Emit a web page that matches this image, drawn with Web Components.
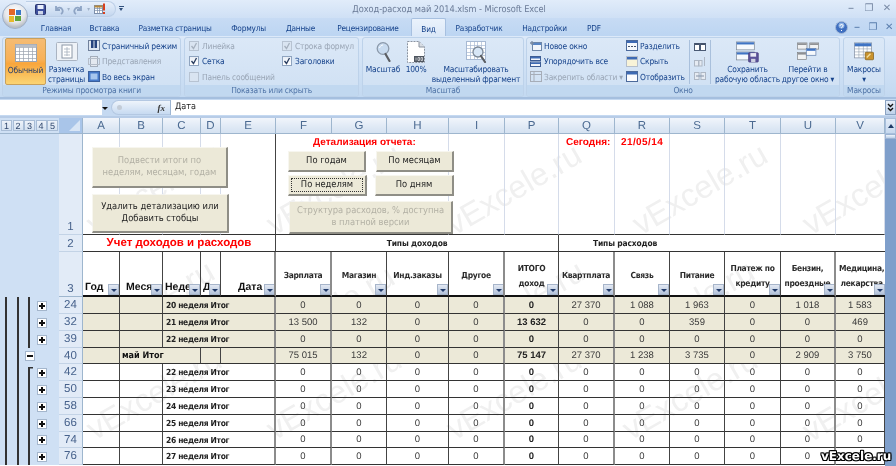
<!DOCTYPE html>
<html lang="ru"><head><meta charset="utf-8"><title>Excel</title>
<style>html,body{margin:0;padding:0;background:#fff}</style></head>
<body>
<x-window></x-window>
<script>
const UI='"Liberation Sans","DejaVu Sans",sans-serif';
const CD='"DejaVu Sans Condensed","Liberation Sans",sans-serif';
const svg=(w,h,b)=>`<svg xmlns="http://www.w3.org/2000/svg" width="${w}" height="${h}" viewBox="0 0 ${w} ${h}" style="display:block">${b}</svg>`;
const sz=(s,w,h)=>s.replace(/width="[\d.]+" height="[\d.]+"/,`width="${w}" height="${h}"`);
function def(name,css,html,extra){
  customElements.define(name,class extends HTMLElement{
    constructor(){super();const s=this.attachShadow({mode:'open'});
      s.innerHTML=`<style>*{box-sizing:border-box}${css}</style>`+(typeof html==='function'?html(this):html);}
    connectedCallback(){
      if(this._done)return;this._done=1;
      if(extra)extra.call(this,this.shadowRoot);
    }
  });
}
const gridRows=(x,y,w,h,c,nx,ny)=>{let s=`<rect x="${x}" y="${y}" width="${w}" height="${h}" fill="#fff" stroke="${c}"/>`;
  for(let i=1;i<nx;i++){const p=x+Math.round(i*w/nx);s+=`<path d="M${p} ${y}V${y+h}" stroke="${c}" stroke-width=".7"/>`}
  for(let i=1;i<ny;i++){const p=y+Math.round(i*h/ny);s+=`<path d="M${x} ${p}H${x+w}" stroke="${c}" stroke-width=".7"/>`}
  return s;};
const IC={
 save:svg(11,11,`<rect x=".5" y=".5" width="10" height="10" rx="1" fill="#3d4f9c" stroke="#2b3670"/><rect x="2.5" y="1" width="6" height="4" fill="#e8eefb"/><rect x="3" y="7" width="5" height="3.5" fill="#cdd6ea"/>`),
 undo:svg(11,11,`<path d="M3 2v4h4M3.500 5.500C5 3 8.500 3 9.500 6 10 7.500 9.500 9 8 10" fill="none" stroke="#8ea4c4" stroke-width="1.800"/>`),
 redo:svg(11,11,`<path d="M8 2v4H4M7.500 5.500C6 3 2.500 3 1.500 6 1 7.500 1.500 9 3 10" fill="none" stroke="#8ea4c4" stroke-width="1.800"/>`),
 custom:svg(12,12,`${gridRows(.5,2.5,8,8,'#7d8fab',3,3)}<rect x=".5" y="2.500" width="8" height="2" fill="#b88a3c"/><path d="M10 .5v7" stroke="#d8401e" stroke-width="2"/><rect x="9" y="9" width="2" height="2" fill="#d8401e"/>`),
 normal:svg(22,18,`${gridRows(.5,.5,21,17,'#9aa2ae',5,5)}<rect x=".5" y=".5" width="21" height="3" fill="#b9bec6"/>`),
 layout:svg(22,19,`<rect x=".5" y=".5" width="21" height="18" rx="1" fill="#eef2f7" stroke="#aab4c2"/><rect x="6" y="3" width="10" height="13" fill="#fff" stroke="#8c98a8"/><path d="M8 7h6M8 10h6M8 13h6M11 5v9" stroke="#a5aebb" stroke-width=".8"/>`),
 pgbreak:svg(12,11,`<rect x=".5" y=".5" width="11" height="10" fill="#dfe7f2" stroke="#70819c"/><rect x="3" y="0" width="2.500" height="8" fill="#27447e"/><rect x="6.500" y="0" width="2.500" height="8" fill="#27447e"/>`),
 views:svg(12,11,`<rect x="2.500" y=".5" width="7" height="10" fill="#e4e9f0" stroke="#a3adbb"/><rect x=".5" y="2.500" width="11" height="6" fill="none" stroke="#b5bdc9"/>`),
 full:svg(12,11,`<rect x=".5" y=".5" width="11" height="10" fill="#4578c8" stroke="#3a5f9c"/><rect x="2.500" y="2.500" width="7" height="6" fill="#a7c6ee"/>`),
 zoom:svg(15,20,`<circle cx="7" cy="6.500" r="5.800" fill="#c8dbf0" stroke="#8c9aab" stroke-width="1.300"/><path d="M9.500 12l4 7" stroke="#5c5f64" stroke-width="2.200" stroke-linecap="round"/><path d="M3.500 6c.6-2 2-3 3.600-3" stroke="#fff" fill="none" stroke-width="1"/>`),
 hundred:svg(18,22,`<path d="M.5.5H12L17.500 6V21.500H.5z" fill="#fff" stroke="#8a93a0" stroke-dasharray="2 1"/><path d="M12 .5V6H17.500" fill="#d8dde4" stroke="#8a93a0"/><rect x="7" y="15" width="10" height="6" fill="#4f5660"/><path d="M9 16.500v3M11 16.500h1.500v3H11zM14 16.500h1.500v3H14z" stroke="#fff" stroke-width=".6" fill="none"/>`),
 zoomsel:svg(21,22,`${gridRows(.5,.5,19,18,'#a7b9d3',5,5)}<circle cx="12" cy="11" r="5" fill="#d7e6f6" stroke="#7b8796" stroke-width="1.300"/><path d="M15 15l4 6" stroke="#5c5f64" stroke-width="2.200" stroke-linecap="round"/>`),
 newwin:svg(12,11,`<rect x="2.500" y="2.500" width="9" height="8" fill="#f3f6fb" stroke="#6d86a8"/><rect x="3" y="3" width="8" height="2" fill="#5a86c4"/><path d="M0 3h4M2 1v4" stroke="#7a8aa3" stroke-width="1.300"/>`),
 arrange:svg(12,11,`<rect x=".5" y=".5" width="10" height="4" fill="#f3f6fb" stroke="#3d5d94"/><rect x="1" y="1" width="9" height="1.500" fill="#3d6ab4"/><rect x=".5" y="6" width="10" height="4.500" fill="#f3f6fb" stroke="#3d5d94"/><rect x="1" y="6.500" width="9" height="1.500" fill="#3d6ab4"/>`),
 freeze:svg(12,11,`<rect x=".5" y=".5" width="11" height="10" fill="none" stroke="#a6adb8"/><path d="M.5 3.500h11M4 .5v10" stroke="#a6adb8"/>`),
 split:svg(12,11,`<rect x=".5" y=".5" width="11" height="10" fill="#f6f9fd" stroke="#4c6a9b"/><rect x="1" y="1" width="10" height="2" fill="#3d6ab4"/><path d="M2 6.500h2M5 6.500h2M8 6.500h2" stroke="#44526b"/>`),
 hide:svg(12,11,`<rect x=".5" y=".5" width="11" height="10" fill="#f8f3d8" stroke="#b6bfcb"/><rect x="1" y="1" width="10" height="2.500" fill="#3d6ab4"/>`),
 unhide:svg(12,11,`<rect x=".5" y=".5" width="11" height="10" fill="#fbfcfe" stroke="#4c6a9b"/><rect x="1" y="1" width="10" height="2.500" fill="#3d6ab4"/>`),
 cmp1:svg(12,10,`<rect x=".5" y="1.500" width="5" height="7" fill="#fff" stroke="#4a5a74"/><rect x="6.500" y="1.500" width="5" height="7" fill="#fff" stroke="#4a5a74"/><rect x="1" y="1" width="4" height="2" fill="#44526b"/><rect x="7" y="1" width="4" height="2" fill="#44526b"/>`),
 cmp2:svg(12,10,`<rect x=".5" y="3.500" width="4" height="5.500" fill="#e6ebf2" stroke="#aeb7c4"/><rect x="5" y="3.500" width="3" height="5.500" fill="#e6ebf2" stroke="#aeb7c4"/><path d="M10.500 0v9" stroke="#aeb7c4"/>`),
 cmp3:svg(12,10,`<rect x=".5" y="1.500" width="4.500" height="7" fill="#e6ebf2" stroke="#aeb7c4"/><rect x="7" y="1.500" width="4.500" height="7" fill="#e6ebf2" stroke="#aeb7c4"/><path d="M2 5h8" stroke="#8593a8"/>`),
 workspace:sz(svg(32,29,`<rect x=".5" y=".5" width="25" height="11" fill="#f6f9fd" stroke="#7d8897"/><rect x="1" y="1" width="24" height="3" fill="#3f74c4"/><rect x=".5" y="14.500" width="25" height="11" fill="#f6f9fd" stroke="#7d8897"/><rect x="1" y="15" width="24" height="3" fill="#3f74c4"/><rect x="17.500" y="15.500" width="13.500" height="13" rx="1" fill="#5b5299" stroke="#453c7c"/><rect x="20" y="16" width="8" height="5" fill="#e9eaf4"/><rect x="21" y="24" width="6" height="4.500" fill="#cfd1e2"/>`),23,22),
 switchw:sz(svg(32,26,`<rect x=".5" y=".5" width="14" height="9" fill="#f1f2f3" stroke="#7d8084"/><rect x="1" y="1" width="13" height="2.500" fill="#8d8f93"/><rect x="18.500" y=".5" width="13" height="9" fill="#f1f2f3" stroke="#7d8084"/><rect x="19" y="1" width="12" height="2.500" fill="#8d8f93"/><rect x=".5" y="14.500" width="13" height="10" fill="#f1f2f3" stroke="#7d8084"/><rect x="1" y="15" width="12" height="2.500" fill="#8d8f93"/><rect x="13.500" y="8.500" width="14" height="10" fill="#f6f9fd" stroke="#5c7aa8"/><rect x="14" y="9" width="13" height="3" fill="#3f74c4"/>`),22,19),
 macros:sz(svg(28,24,`${gridRows(.5,.5,23,20,'#8693a6',4,5)}<rect x="1" y="1" width="22" height="4" fill="#3f74c4"/><rect x="15" y="13" width="11" height="10" rx="1" fill="#c9922c" stroke="#86601c"/><path d="M17 20l5-5" stroke="#f3dd9c" stroke-width="2"/>`),21,19),
 orb:svg(26,26,`<defs><radialGradient id="o" cx=".5" cy=".35" r=".75"><stop offset="0" stop-color="#fff"/><stop offset=".55" stop-color="#e4e6ea"/><stop offset=".8" stop-color="#b7bcc4"/><stop offset="1" stop-color="#f3e6c4"/></radialGradient></defs><circle cx="13" cy="13" r="12.500" fill="url(#o)" stroke="#9eb0c9"/><path d="M7 6h6v6H7z" fill="#e2662a"/><path d="M14 7h5v5h-5z" fill="#3c78c6"/><path d="M7 13h5v6H7z" fill="#e8b92e"/><path d="M13 13h6v5h-6z" fill="#61a53c"/>`),
 help:svg(13,13,`<circle cx="6.500" cy="6.500" r="6" fill="#3f6fc0" stroke="#a6bbd8"/><circle cx="6.500" cy="4.500" r="3" fill="#a5c6ee" opacity=".8"/><path d="M5 5c0-2 3-2 3-.3 0 1-1.500 1.200-1.500 2.500M6.500 9v1" stroke="#fff" fill="none"/>`),
 expand:svg(7,9,`<path d="M1 1l2.500 2.500L6 1M1 5l2.500 2.500L6 5" fill="none" stroke="#111" stroke-width="1.400"/>`)
};

def('x-titlebar',`:host{display:flex;height:18px;flex:none;position:relative;background:linear-gradient(#e1ecfa,#cfe0f5);font:9.2px ${CD};letter-spacing:-.06px;color:#6a7a96;align-items:center;justify-content:center}
.orb{position:absolute;left:2px;top:3px;z-index:5}
.qat{position:absolute;left:26px;top:1px;width:90px;height:16px;border-radius:0 9px 9px 0;background:linear-gradient(#e8f0fb,#c4d7ef);border:1px solid #bccfe7;border-left:0;display:flex;align-items:center;padding-left:9px}
.qat i{font-style:normal;font-size:6px;color:#9fb1c9;width:9px;text-align:center;flex:none}
.more{position:absolute;left:119px;top:6px;width:5px;height:5px;border-top:1px solid #31507c}
.more:after{content:"";position:absolute;left:0;top:1px;border:2.500px solid transparent;border-top:3px solid #31507c}
.t{margin-left:2px}
.c{position:absolute;right:0;top:4px;display:flex;color:#7a8ba6;font:bold 10px ${UI}}
.c span{width:18px;text-align:center;line-height:10px}`,
`<div class="orb">${IC.orb}</div><div class="qat">${IC.save}<span style="width:7px"></span>${IC.undo}<i>▾</i>${IC.redo}<i>▾</i><span style="width:1px"></span>${IC.custom}</div><div class="more"></div><div class="t">Доход-расход май 2014.xlsm - Microsoft Excel</div>
<div class="c"><span>–</span><span>❐</span><span>✕</span></div>`);

const TABS=[['Главная',48],['Вставка',49],['Разметка страницы',92],['Формулы',55],['Данные',49],['Рецензирование',86],['Вид',35],['Разработчик',66],['Надстройки',65],['PDF',34]];
def('x-tabs',`:host{display:flex;height:18px;flex:none;position:relative;background:linear-gradient(#c7dbf4,#bcd5f2);font:8.2px ${CD};letter-spacing:-.2px;color:#15428b;padding-left:32px;align-items:stretch}
span{display:flex;align-items:center;justify-content:center;flex:none;padding-top:2px}
.a{background:linear-gradient(#eaf2fc,#dbe8f8);border:1px solid #a7c0e0;border-bottom:0;border-radius:2px 2px 0 0}
.c{position:absolute;right:-1px;top:3px;display:flex;align-items:center;color:#5b7fae;font:bold 10px ${UI}}
.c b{width:16px;text-align:center;font-weight:bold}`,
`${TABS.map(([t,w])=>`<span class="${t==='Вид'?'a':''}" style="width:${w}px">${t}</span>`).join('')}<div class="c"><div style="margin-right:1px">${IC.help}</div><b>–</b><b>❐</b><b>✕</b></div>`);

def('x-ribbon',`:host{display:flex;height:63px;flex:none;background:linear-gradient(#dce9f9,#c3d9f1);border-bottom:2px solid #a5bfdf;padding:1px 0 0 2px;gap:3px}`,`<slot></slot>`);

def('x-group',`:host{display:flex;flex-direction:column;height:60px;flex:none;border:1px solid #bdd2ea;border-radius:3px;background:linear-gradient(#dbe8f7,#cfe0f3);overflow:hidden;font:8.4px ${CD};letter-spacing:-.2px;color:#15428b}
.b{flex:1;display:flex;min-height:0}
.l{flex:none;height:11px;line-height:10px;text-align:center;background:#c1d8f0;color:#4f73a6}`,
h=>`<div class="b"><slot></slot></div><div class="l">${h.getAttribute('label')}</div>`);

def('x-big',`:host{display:flex;flex-direction:column;align-items:center;flex:none;height:47px;font:8.4px/9.500px ${CD};letter-spacing:-.2px;color:#15428b;text-align:center;white-space:nowrap}
:host([on]){background:linear-gradient(#f5bc74 0,#f8b158 45%,#f9a63c 55%,#fbd473 100%);border:1px solid #c8a05c;border-radius:2px;color:#273f6b}
.i{height:27px;display:flex;align-items:center;justify-content:center;flex:none}`,
h=>`<div class="i"><slot name="i"></slot></div><slot></slot>`);

def('x-col',`:host{display:flex;flex-direction:column;flex:none}`,`<slot></slot>`);

def('x-item',`:host{display:flex;align-items:center;height:15.500px;gap:2px;flex:none;white-space:nowrap;font:8.4px ${CD};letter-spacing:-.2px;color:#15428b}
:host([off]){color:#9aa6b6}`,`<slot name="i"></slot><slot></slot>`);

def('x-check',`:host{display:flex;align-items:center;height:15.500px;gap:3px;flex:none;white-space:nowrap;font:8.4px ${CD};letter-spacing:-.2px;color:#15428b}
:host([off]){color:#9aa6b6}
.b{width:10px;height:10px;border:1px solid #8fa4bf;background:linear-gradient(#e8eef6,#fff);display:flex;align-items:center;justify-content:center}
:host([off]) .b{border-color:#b7c3d2;background:#d9e4f1}`,
h=>`<span class="b">${h.hasAttribute('checked')?svg(8,8,`<path d="M1.500 4l2 2.500L6.500 1" fill="none" stroke="${h.hasAttribute('off')?'#a6b1bf':'#2a3d5f'}" stroke-width="1.300"/>`):''}</span><slot></slot>`);

def('x-formula',`:host{display:flex;height:17px;flex:none;background:#c5d9f1;padding-top:1px;font:9px ${CD};color:#222}
.n{width:102px;height:15px;background:#fff}
.a{width:6px;display:flex;align-items:center;justify-content:center;margin-right:3px}
.a:after{content:"";border:3px solid transparent;border-top:3px solid #111;margin-top:3px}
.fx{width:59px;height:15px;position:relative;background:linear-gradient(#eef4fb,#c7daf1);border-radius:9px 0 0 9px;border:1px solid #b4c8e2;border-right:0;display:flex;align-items:center;justify-content:flex-end;padding-right:5px;font:italic bold 9px "Liberation Serif",serif;color:#333}
.fx:before{content:"";position:absolute;left:5px;top:4px;width:5px;height:5px;border-radius:50%;background:#c3ccd7}
.v{flex:1;height:15px;background:#fff;border-left:1px solid #9db5d2;padding-left:4px;line-height:14px}
.e{width:11px;height:15px;background:linear-gradient(#e6eef9,#bfd2ea);border:1px solid #8ba3c2;display:flex;align-items:center;justify-content:center}`,
`<div class="n"></div><div class="a"></div><div class="fx">fx</div><div class="v">Дата</div><div class="e">${IC.expand}</div>`);

def('x-xlbtn',`:host{position:absolute;display:flex;align-items:center;justify-content:center;text-align:center;background:#ece9d8;border-right:2px solid #8f8e86;border-bottom:2px solid #8f8e86;border-top:1px solid #f7f6ef;border-left:1px solid #f7f6ef;font:9.3px/12.500px ${CD};color:#222;white-space:nowrap;z-index:3}
:host([off]){color:#b2b0a4}
:host([focus])::after{content:"";position:absolute;inset:2px;border:1px dotted #333}`,`<slot></slot>`);

const COLS=[['A',37],['B',43],['C',38],['D',20],['E',55],['F',56],['G',55],['H',62],['I',56],['P',54],['Q',56],['R',55],['S',55],['T',56],['U',55],['V',49]];
const HEAD=[['Год','l'],['Меся','l lb'],['Неде','l'],['Д','l'],['Дата','l2 gr'],['Зарплата','gr'],['Магазин'],['Инд.заказы'],['Другое','gr'],['ИТОГО<br>доход'],['Квартплата','gr'],['Связь'],['Питание'],['Платеж по<br>кредиту'],['Бензин,<br>проездные','gr'],['Медицина,<br>лекарства','clip']];
const Z=['0','0','0','0','0','0','0','0','0','0','0'];
const ROWS=[
 [24,1,'20 неделя Итог',['0','0','0','0','0','27 370','1 088','1 963','0','1 018','1 583']],
 [32,1,'21 неделя Итог',['13 500','132','0','0','13 632','0','0','359','0','0','469']],
 [39,1,'22 неделя Итог',Z],
 [40,1,'май Итог',['75 015','132','0','0','75 147','27 370','1 238','3 735','0','2 909','3 750']],
 [42,0,'22 неделя Итог',Z],[50,0,'23 неделя Итог',Z],[58,0,'24 неделя Итог',Z],
 [66,0,'25 неделя Итог',Z],[74,0,'26 неделя Итог',Z],[76,0,'27 неделя Итог',Z],
];
const HS=[17,17,17,16,17,17,17,17,16,17];
const WMARKS=[[97,240],[277,240],[457,240],[643,240],[813,240],[90,357],[270,362],[460,357],[630,357],[810,357],[97,445],[277,445],[457,445],[633,445],[813,447]];
const BG='#cfe0f4',LN=x=>`linear-gradient(#333,#333) ${x}px 0/2px 100% no-repeat`;
def('x-sheet',`:host{display:block;flex:1;min-width:0;height:350px;position:relative;overflow:hidden;background:#fff;border-top:2px solid #b7cce7;font:9.5px ${UI};color:#333}
.g{display:grid;grid-template-columns:59px 24px ${COLS.map(c=>c[1]+'px').join(' ')};grid-template-rows:16px 101px 17px 45px ${HS.map(h=>h+'px').join(' ')}}
.g>div{min-width:0;min-height:0}
.ch{background:linear-gradient(#f1f5fb,#dfe9f5 60%,#d5e2f1);border-right:1px solid #9eb6ce;border-bottom:1px solid #9eb6ce;color:#4b6a91;font-size:11.500px;display:flex;align-items:center;justify-content:center}
.lv{background:${BG};border-bottom:1px solid #9eb6ce;display:flex;align-items:center;padding-left:1px}
.lv b{width:11px;height:11px;font:9px/10px ${UI};text-align:center;background:linear-gradient(#eef3fa,#d5e2f1);border:1px solid #a9bdd6;color:#30476d;margin-right:.5px}
.cor{background:#a9c5e9;position:relative;border-right:1px solid #9eb6ce;border-bottom:1px solid #9eb6ce}
.cor:after{content:"";position:absolute;right:2px;bottom:2px;width:0;height:0;border-left:11px solid transparent;border-bottom:11px solid #d8e5f5}
.gut{background:${BG}}
.rh{background:#e2ebf7;border-right:1px solid #9eb6ce;border-bottom:1px solid #c3d3e6;color:#47628c;font-size:11.500px;display:flex;align-items:flex-end;justify-content:center;line-height:14px}
.r1{border-right:1px solid #d5dcea;border-bottom:1px solid #333}
.dk{border-right:1px solid #444}
.red{color:#f00;font:bold 10px ${UI};padding-top:3px;white-space:nowrap}
.r2{border-bottom:1px solid #333;display:flex;align-items:center;justify-content:center;font:bold 8.4px ${CD};letter-spacing:-.15px;color:#222;border-right:1px solid #444;white-space:nowrap}
.ttl{color:#f00;font:bold 11.500px ${UI};letter-spacing:0}
.hd{position:relative;border-right:1px solid #444;border-bottom:2px solid #111;display:flex;align-items:center;justify-content:center;text-align:center;font:bold 8.4px/15px ${CD};letter-spacing:-.3px;color:#2b2b2b;white-space:nowrap;overflow:hidden;padding-top:4px}
.hd.l,.hd.l2{justify-content:flex-start;align-items:flex-end;padding:0 0 1px 2px;font:bold 10.500px/13px ${UI};letter-spacing:0;color:#111}
.hd.lb{padding-left:6px}
.hd.l2{padding-left:17px}
.hd.clip{justify-content:flex-start;padding-left:3px;border-right:0}
.hd.gr,.d.gr{border-right:2px solid #8c8c8c}
.hd.gr .fl{right:-1px}
.fl{position:absolute;right:0;bottom:0;width:11px;height:11px;background:linear-gradient(#e3e9f3,#b3c2da);border:1px solid #a7b5ca}
.fl:after{content:"";position:absolute;left:2px;top:4px;border:3px solid transparent;border-top:3px solid #203a6a}
.o{background:${LN(5)},${LN(17)};background-color:${BG};display:flex;align-items:center}
.o.l3{background:${LN(5)},${LN(17)},${LN(28)};background-color:${BG}}
.o.st{background:${LN(5)},${LN(17)},linear-gradient(#333,#333) 28px 3px/2px 100% no-repeat,linear-gradient(#333,#333) 28px 3px/5px 1.500px no-repeat;background-color:${BG}}
.pm{width:10px;height:10px;background:#fff;border:1px solid #a4b6cc;position:relative;flex:none;margin-left:37px}
.pm:before{content:"";position:absolute;left:1px;right:1px;top:3px;height:2px;background:#111}
.pm.p:after{content:"";position:absolute;top:1px;bottom:1px;left:3px;width:2px;background:#111}
.pm.m{margin-left:25px}
.d{display:flex;align-items:center;justify-content:center;border-right:1px solid #444;border-bottom:1px solid #333;font:9.500px ${UI};color:#3a3a3a;white-space:nowrap;overflow:hidden}
.be{background:#ece9d8}
.bo{font-weight:bold;color:#222}
.it{justify-content:flex-start;padding-left:3px;font:bold 8.4px ${CD};letter-spacing:-.3px;color:#222}
.mt{font:bold 9px ${CD};color:#111;padding-left:2px;justify-content:flex-start}
.w{position:absolute;transform-origin:0 100%;transform:rotate(-30deg);font:32px/32px ${UI};color:#f0f0f0;mix-blend-mode:darken;white-space:nowrap;pointer-events:none;z-index:4}`,
`<div class="g" id="g"></div><div id="o"></div>`,
function(s){
  const oy=118;
  let h=`<div class="lv">${[1,2,3,4,5].map(n=>`<b>${n}</b>`).join('')}</div><div class="cor"></div>`;
  h+=COLS.map(c=>`<div class="ch">${c[0]}</div>`).join('');
  h+=`<div class="gut"></div><div class="rh">1</div>`;
  ['A','B','C','D'].forEach(()=>h+=`<div class="r1"></div>`);
  h+=`<div class="r1 dk"></div>`;
  h+=`<div class="r1 red" style="grid-column:span 3;padding-left:37px">Детализация отчета:</div>`;
  h+=`<div class="r1"></div><div class="r1"></div>`;
  h+=`<div class="r1 red" style="padding-left:7px">Сегодня:</div><div class="r1 red" style="padding-left:6px;letter-spacing:.4px">21/05/14</div>`;
  ['S','T','U','V'].forEach(()=>h+=`<div class="r1"></div>`);
  h+=`<div class="gut"></div><div class="rh">2</div>`;
  h+=`<div class="r2 ttl" style="grid-column:span 5">Учет доходов и расходов</div>`;
  h+=`<div class="r2" style="grid-column:span 5">Типы доходов</div>`;
  h+=`<div class="r2" style="grid-column:span 6;justify-content:flex-start;padding-left:34px;border-right:0">Типы расходов</div>`;
  h+=`<div class="gut"></div><div class="rh" style="border-bottom-color:#9eb6ce">3</div>`;
  HEAD.forEach(c=>{h+=`<div class="hd ${c[1]||''}"><span>${c[0]}</span><i class="fl"></i></div>`;});
  ROWS.forEach(r=>{
    const [n,be,lab,v]=r,cl=be?' be':'',m=n===40;
    const gut=m?'':(n===42?'st':'l3');
    h+=`<div class="o ${gut}"><span class="pm ${m?'m':'p'}"></span></div><div class="rh" style="align-items:center">${n}</div>`;
    h+=`<div class="d${cl}"></div>`;
    if(m){h+=`<div class="d mt${cl}" style="grid-column:span 2">${lab}</div><div class="d${cl}"></div><div class="d gr${cl}"></div>`;}
    else{h+=`<div class="d${cl}"></div><div class="d it gr${cl}" style="grid-column:span 3">${lab}</div>`;}
    v.forEach((x,j)=>{h+=`<div class="d${cl}${j===4?' bo':''}${[0,3,5,9].includes(j)?' gr':''}">${x}</div>`;});
  });
  s.getElementById('g').innerHTML=h;
  const btn=(x,y,x2,y2,t,a='')=>`<x-xlbtn ${a} style="left:${x}px;top:${y-oy}px;width:${x2-x}px;height:${y2-y}px">${t}</x-xlbtn>`;
  let o=btn(92,147,228,188,'Подвести итоги по<br>неделям, месяцам, годам','off')
   +btn(92,194,229,233,'Удалить детализацию или<br>Добавить стобцы')
   +btn(288,151,366,172,'По годам')+btn(376,151,454,172,'По месяцам')
   +btn(288,175,367,196,'По неделям','focus')+btn(375,175,454,196,'По дням')
   +btn(289,201,453,234,'Структура расходов, % доступна<br>в платной версии','off');
  o+=WMARKS.map(([x,y])=>`<span class="w" style="left:${x}px;top:${y-oy-32}px">vExcele.ru</span>`).join('');
  s.getElementById('o').innerHTML=o;
});

def('x-scroll',`:host{display:flex;flex-direction:column;width:11px;height:350px;flex:none;background:#7f9fcb;border-top:2px solid #b7cce7}
.b{height:16px;background:linear-gradient(#e3ecf8,#c6d8ee);display:flex;align-items:center;justify-content:center;border:1px solid #a8bfdc}
.b:after{content:"";border:3px solid transparent;border-bottom:4px solid #1e3a66;margin-top:-4px}
.t{height:5px;background:linear-gradient(#eef4fb,#bcd0ea);border:1px solid #9db4d3}`,`<div class="b"></div><div class="t"></div>`);

def('x-badge',`:host{position:absolute;left:821px;top:449px;z-index:9;font:bold 12px/15px "DejaVu Sans",sans-serif;color:#fff;text-shadow:1px 0 #000,-1px 0 #000,0 1px #000,0 -1px #000,1px 1px #000,-1px -1px #000,1px -1px #000,-1px 1px #000;white-space:nowrap}`,`<slot></slot>`);

def('x-window',`:host{display:flex;flex-direction:column;width:896px;height:466px;overflow:hidden;position:relative;background:#fff;filter:blur(.35px);text-rendering:geometricPrecision}
.s{display:flex;flex:none}`,
`<x-titlebar></x-titlebar><x-tabs></x-tabs>
<x-ribbon>
 <x-group label="Режимы просмотра книги" style="width:179px">
  <x-big on style="width:41px;margin-left:2px"><span slot="i">${IC.normal}</span>Обычный</x-big>
  <x-big style="width:41px"><span slot="i">${IC.layout}</span>Разметка<br>страницы</x-big>
  <x-col style="margin-left:1px">
   <x-item><span slot="i">${IC.pgbreak}</span>Страничный режим</x-item>
   <x-item off><span slot="i">${IC.views}</span>Представления</x-item>
   <x-item><span slot="i">${IC.full}</span>Во весь экран</x-item>
  </x-col>
 </x-group>
 <x-group label="Показать или скрыть" style="width:175px">
  <x-col style="width:93px;margin-left:4px">
   <x-check off checked>Линейка</x-check><x-check checked>Сетка</x-check><x-check off>Панель сообщений</x-check>
  </x-col>
  <x-col>
   <x-check off checked>Строка формул</x-check><x-check checked>Заголовки</x-check>
  </x-col>
 </x-group>
 <x-group label="Масштаб" style="width:162px">
  <x-big style="width:38px;margin-left:1px"><span slot="i">${IC.zoom}</span>Масштаб</x-big>
  <x-big style="width:28px"><span slot="i">${IC.hundred}</span>100%</x-big>
  <x-big style="width:92px"><span slot="i">${IC.zoomsel}</span>Масштабировать<br>выделенный фрагмент</x-big>
 </x-group>
 <x-group label="Окно" style="width:314px;margin-left:-1px">
  <x-col style="width:96px;margin-left:3px">
   <x-item><span slot="i">${IC.newwin}</span>Новое окно</x-item>
   <x-item><span slot="i">${IC.arrange}</span>Упорядочить все</x-item>
   <x-item off><span slot="i">${IC.freeze}</span>Закрепить области ▾</x-item>
  </x-col>
  <x-col style="width:63px">
   <x-item><span slot="i">${IC.split}</span>Разделить</x-item>
   <x-item><span slot="i">${IC.hide}</span>Скрыть</x-item>
   <x-item><span slot="i">${IC.unhide}</span>Отобразить</x-item>
  </x-col>
  <x-col style="width:22px;border-left:1px solid #a9c0dc;border-right:1px solid #a9c0dc;height:44px;margin-top:2px;padding:0 4px">
   <x-item style="height:14.500px">${IC.cmp1}</x-item><x-item style="height:14.500px">${IC.cmp2}</x-item><x-item style="height:14.500px">${IC.cmp3}</x-item>
  </x-col>
  <x-big style="width:67px;margin-left:3px"><span slot="i">${IC.workspace}</span>Сохранить<br>рабочую область</x-big>
  <x-big style="width:54px"><span slot="i">${IC.switchw}</span>Перейти в<br>другое окно ▾</x-big>
 </x-group>
 <x-group label="Макросы" style="width:42px">
  <x-big style="width:40px"><span slot="i">${IC.macros}</span>Макросы<br>▾</x-big>
 </x-group>
</x-ribbon>
<x-formula></x-formula>
<div class="s"><x-sheet></x-sheet><x-scroll></x-scroll></div>
<x-badge>vExcele.ru</x-badge>`);
</script>
</body></html>
